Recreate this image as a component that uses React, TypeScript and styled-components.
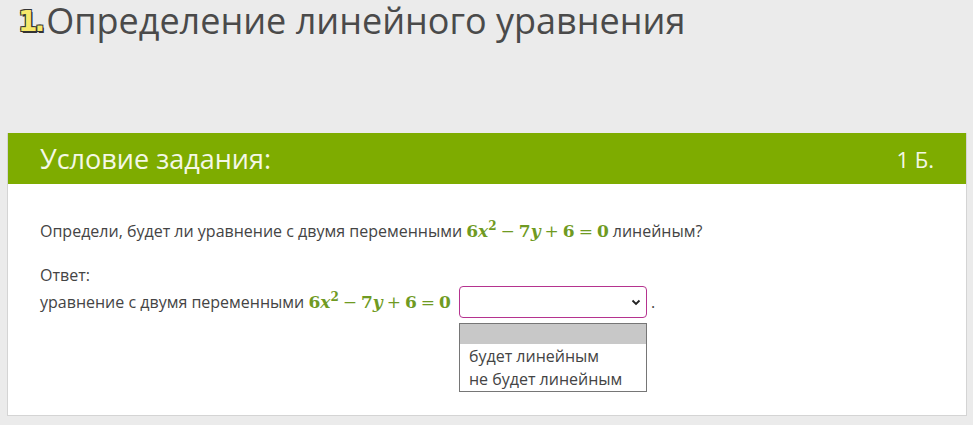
import React from "react";
import styled, { createGlobalStyle } from "styled-components";

const Global = createGlobalStyle`
  html, body { margin: 0; padding: 0; }
  body {
    background: #ebebeb;
    font-family: "Open Sans", "Noto Sans", sans-serif;
    color: #444;
  }
`;

const Page = styled.div`
  width: 973px;
  height: 425px;
  overflow: hidden;
  display: flex;
  flex-direction: column;
`;

const TitleRow = styled.h1`
  margin: 0;
  padding: 0 0 0 18px;
  height: 42px;
  display: flex;
  align-items: center;
  gap: 4px;
  font-weight: 400;
  font-size: 36px;
  color: #4a4a4a;
  line-height: 42px;
`;

const Num = styled.span`
  font-family: "DejaVu Sans", sans-serif;
  font-weight: 700;
  font-size: 28px;
  line-height: 30px;
  color: #f7e96b;
  text-shadow: -1px -1px 0 #333, 1px -1px 0 #333, -1px 1px 0 #333, 1.5px 1.5px 0 #333;
  letter-spacing: -3px;
  margin-top: 2px;
`;

const Card = styled.section`
  margin: 91px 0 0 7px;
  width: 958px;
  border: 1px solid #d4d4d4;
  border-top: none;
  background: #fff;
  height: 282px;
`;

const Header = styled.div`
  height: 51px;
  background: #7eac00;
  display: flex;
  align-items: center;
  justify-content: space-between;
  padding: 0 32px 0 32px;
  color: #f4f8e6;
  font-size: 27px;
`;

const Points = styled.span`
  font-size: 22px;
`;

const Body = styled.div`
  padding: 36px 32px 0 32px;
  font-size: 16px;
  line-height: 22px;
`;

const Question = styled.p`
  margin: 0 0 22px;
`;

const Answer = styled.div`
  display: flex;
  flex-direction: column;
  gap: 0;
`;

const Line = styled.div`
  display: flex;
  align-items: center;
  white-space: pre;
`;

const Math = styled.span`
  font-family: "DejaVu Serif", "Liberation Serif", serif;
  font-weight: 700;
  font-size: 17px;
  color: #6f9a22;
  margin: 0 4px 0 0;
`;

const V = styled.i`
  font-style: italic;
`;

const Sup = styled.sup`
  font-size: 12px;
  vertical-align: 7px;
  line-height: 0;
`;

const Op = styled.span`
  font-weight: 400;
  margin: 0 4px;
`;

const SelectWrap = styled.div`
  position: relative;
  margin-left: 4px;
`;

const Select = styled.div`
  width: 182px;
  height: 30px;
  border: 1px solid #b5338f;
  border-radius: 4px;
  background: #fff;
  display: flex;
  align-items: center;
  justify-content: flex-end;
  padding-right: 4px;
  box-sizing: content-box;
`;

const List = styled.div`
  position: absolute;
  left: 0;
  top: 37px;
  width: 186px;
  border: 1px solid #767676;
  background: #fff;
  font-size: 16px;
  color: #444;
`;

const Opt = styled.div<{ $active?: boolean }>`
  height: ${(p) => (p.$active ? "20px" : "23px")};
  line-height: 23px;
  padding: 0 9px;
  background: ${(p) => (p.$active ? "#c8c8c8" : "transparent")};
  margin-bottom: ${(p) => (p.$active ? "1px" : "0")};
`;

const Formula = () => (
  <Math>
    6<V>x</V>
    <Sup>2</Sup>
    <Op>−</Op>7<V>y</V>
    <Op>+</Op>6<Op>=</Op>0
  </Math>
);

export default function App() {
  return (
    <Page>
      <Global />
      <TitleRow>
        <Num>1.</Num>
        <span>Определение линейного уравнения</span>
      </TitleRow>
      <Card>
        <Header>
          <span>Условие задания:</span>
          <Points>1 Б.</Points>
        </Header>
        <Body>
          <Question>
            <Line>
              Определи, будет ли уравнение с двумя переменными <Formula />линейным?
            </Line>
          </Question>
          <Answer>
            <div>Ответ:</div>
            <Line>
              уравнение с двумя переменными <Formula />
              <SelectWrap>
                <Select>
                  <svg width="12" height="12" viewBox="0 0 12 12">
                    <path d="M2.5 4.5 L6 8 L9.5 4.5" fill="none" stroke="#222" strokeWidth="1.8" />
                  </svg>
                </Select>
                <List>
                  <Opt $active />
                  <Opt>будет линейным</Opt>
                  <Opt>не будет линейным</Opt>
                </List>
              </SelectWrap>
              <span> .</span>
            </Line>
          </Answer>
        </Body>
      </Card>
    </Page>
  );
}
